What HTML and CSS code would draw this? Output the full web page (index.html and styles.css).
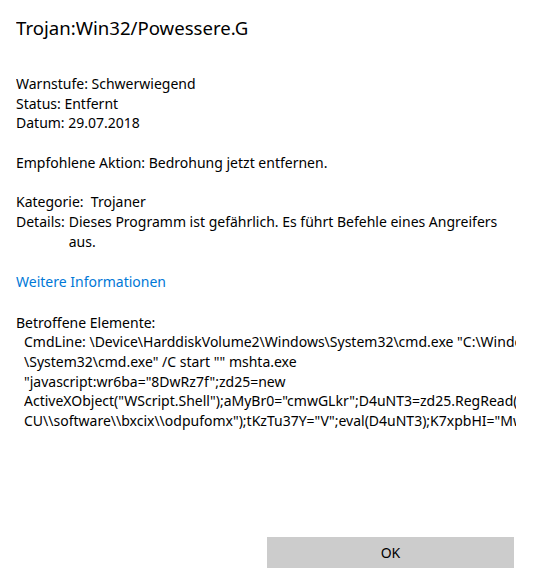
FILE: index.html
```html
<!DOCTYPE html>
<html lang="de">
<head>
    <meta charset="UTF-8">
    <title>Trojan:Win32/Powessere.G</title>
    <link rel="stylesheet" href="styles.css">
</head>
<body>
    <div class="dialog">
        <div class="content">
            <h1>Trojan:Win32/Powessere.G</h1>

            <div class="group">
                <p>Warnstufe: Schwerwiegend</p>
                <p>Status: Entfernt</p>
                <p>Datum: 29.07.2018</p>
            </div>

            <div class="group">
                <p>Empfohlene Aktion: Bedrohung jetzt entfernen.</p>
            </div>

            <div class="group">
                <p>Kategorie:&nbsp; Trojaner</p>
                <div class="detail-row">
                    <span class="label">Details:</span>
                    <span class="value">Dieses Programm ist gefährlich. Es führt Befehle eines Angreifers aus.</span>
                </div>
            </div>

            <div class="group">
                <a class="more-link" href="#">Weitere Informationen</a>
            </div>

            <div class="group">
                <p>Betroffene Elemente:</p>
                <div class="items">
                    <div class="item-line">CmdLine: \Device\HarddiskVolume2\Windows\System32\cmd.exe "C:\Windows</div>
                    <div class="item-line">\System32\cmd.exe" /C start "" mshta.exe</div>
                    <div class="item-line">"javascript:wr6ba="8DwRz7f";zd25=new</div>
                    <div class="item-line">ActiveXObject("WScript.Shell");aMyBr0="cmwGLkr";D4uNT3=zd25.RegRead("HK</div>
                    <div class="item-line">CU\\software\\bxcix\\odpufomx");tKzTu37Y="V";eval(D4uNT3);K7xpbHI="MwB1";</div>
                </div>
            </div>
        </div>

        <div class="footer">
            <button class="ok-btn">OK</button>
        </div>
    </div>
</body>
</html>
```

FILE: styles.css
```css
* {
    margin: 0;
    padding: 0;
    box-sizing: border-box;
}

body {
    font-family: 'Noto Sans', sans-serif;
    font-size: 14px;
    color: #000;
    background: #fff;
    width: 536px;
    height: 582px;
    overflow: hidden;
}

.dialog {
    display: flex;
    flex-direction: column;
    height: 100%;
    padding: 0 20px 14px 16px;
}

.content {
    flex: 1;
    overflow: hidden;
}

h1 {
    font-size: 18.6px;
    font-weight: 400;
    line-height: 26px;
    margin-top: 15px;
    margin-bottom: 33px;
}

.group {
    line-height: 19.7px;
    margin-bottom: 19.7px;
}

.detail-row {
    display: flex;
    gap: 4px;
}

.detail-row .value {
    flex: 1;
    max-width: 440px;
}

.more-link {
    color: #0078d7;
    text-decoration: none;
    line-height: 22px;
}

.items {
    padding-left: 8px;
}

.item-line {
    white-space: nowrap;
    overflow: hidden;
}

.footer {
    display: flex;
    justify-content: flex-end;
    padding-right: 2px;
}

.ok-btn {
    width: 247px;
    height: 31px;
    background: #cccccc;
    border: none;
    font-family: 'Noto Sans', sans-serif;
    font-size: 14px;
    color: #000;
}
```
